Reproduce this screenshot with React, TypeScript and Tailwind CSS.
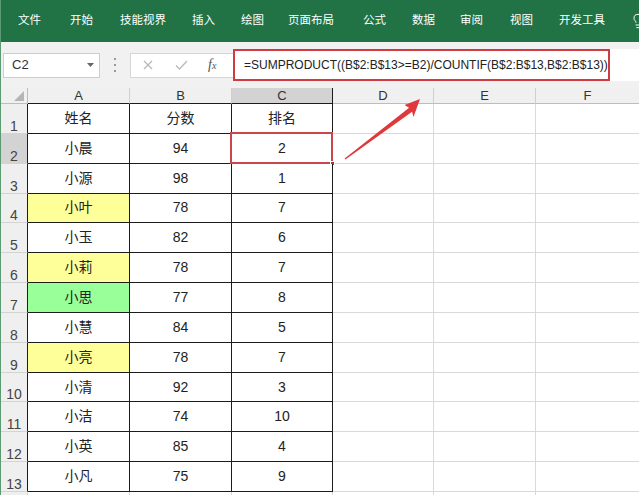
import React from 'react';
import { Lightbulb } from 'lucide-react';

const menu = [
  { label: '文件', cls: 'ml-[17px]' },
  { label: '开始', cls: 'ml-[29px]' },
  { label: '技能视界', cls: 'ml-[27px]' },
  { label: '插入', cls: 'ml-[26px]' },
  { label: '绘图', cls: 'ml-[26px]' },
  { label: '页面布局', cls: 'ml-[24px]' },
  { label: '公式', cls: 'ml-[29px]' },
  { label: '数据', cls: 'ml-[26px]' },
  { label: '审阅', cls: 'ml-[25px]' },
  { label: '视图', cls: 'ml-[27px]' },
  { label: '开发工具', cls: 'ml-[26px]' },
];

type Row = { name: string; score: string; rank: string; fill?: string };

const rows: Row[] = [
  { name: '姓名', score: '分数', rank: '排名' },
  { name: '小晨', score: '94', rank: '2' },
  { name: '小源', score: '98', rank: '1' },
  { name: '小叶', score: '78', rank: '7', fill: 'bg-[#ffff99]' },
  { name: '小玉', score: '82', rank: '6' },
  { name: '小莉', score: '78', rank: '7', fill: 'bg-[#ffff99]' },
  { name: '小思', score: '77', rank: '8', fill: 'bg-[#99ff99]' },
  { name: '小慧', score: '84', rank: '5' },
  { name: '小亮', score: '78', rank: '7', fill: 'bg-[#ffff99]' },
  { name: '小清', score: '92', rank: '3' },
  { name: '小洁', score: '74', rank: '10' },
  { name: '小英', score: '85', rank: '4' },
  { name: '小凡', score: '75', rank: '9' },
];

const COLS = 'grid grid-cols-[27px_102px_102px_101px_101px_102px_104px]';
const FONT = "font-['Liberation_Sans','Noto_Sans_CJK_SC',sans-serif]";

const TableCell: React.FC<{ text: string; fill?: string; selected?: boolean }> = ({ text, fill, selected }) => (
  <div
    className={`relative flex items-center justify-center border-r border-b border-[#1c1c1c] text-[14px] text-[#222] ${fill ?? 'bg-white'}`}
  >
    {text}
    {selected && (
      <>
        <div className="absolute -left-[2px] -top-[2px] -right-[1px] -bottom-[1px] border-2 border-[#c9474b]" />
        <div className="absolute -right-[3px] -bottom-[3px] w-[5px] h-[5px] bg-[#a8383b] border border-white" />
      </>
    )}
  </div>
);

const EmptyCell: React.FC = () => <div className="border-r border-b border-[#d9d9d9] bg-white" />;

export default function App() {
  return (
    <div className={`relative w-[639px] h-[495px] overflow-hidden bg-white border-l border-l-[#5b9a72] ${FONT}`}>
      {/* ribbon tabs */}
      <div className="flex items-center h-[42px] bg-[#217346] text-white text-[11.5px] leading-none">
        {menu.map((m) => (
          <span key={m.label} className={`${m.cls} shrink-0`}>
            {m.label}
          </span>
        ))}
        <Lightbulb size={16} strokeWidth={1.5} className="ml-[25px] shrink-0" />
      </div>

      {/* formula bar */}
      <div className="flex items-center h-[46px] bg-[#f1f1f1]">
        <div className="ml-[2px] flex items-center justify-between w-[97px] h-[25px] bg-white border border-[#cdcdcd] pl-[8px] pr-[5px] text-[13px] text-[#333]">
          <span>C2</span>
          <svg width="7" height="4" viewBox="0 0 7 4">
            <path d="M0 0h7L3.5 4z" fill="#666" />
          </svg>
        </div>
        <div className="flex flex-col items-center justify-center gap-[4px] w-[30px]">
          <span className="w-[2px] h-[2px] bg-[#9a9a9a]" />
          <span className="w-[2px] h-[2px] bg-[#9a9a9a]" />
          <span className="w-[2px] h-[2px] bg-[#9a9a9a]" />
        </div>
        <div className="flex items-center w-[103px] h-[25px] bg-white border border-r-0 border-[#d6d6d6]">
          <svg width="10" height="10" viewBox="0 0 10 10" className="ml-[12px]">
            <path d="M1 1l8 8M9 1l-8 8" stroke="#b9b9b9" strokeWidth="1.3" />
          </svg>
          <svg width="13" height="10" viewBox="0 0 13 10" className="ml-[22px]">
            <path d="M1 5.5l3.5 3.5L12 1" stroke="#b9b9b9" strokeWidth="1.3" fill="none" />
          </svg>
          <span className="ml-[20px] font-['Liberation_Serif',serif] italic text-[14px] text-[#555] leading-none">
            f<span className="text-[10px]">x</span>
          </span>
        </div>
        <div className="flex-1 h-[32px] bg-white">
          <div className="flex items-center w-[377px] h-full border-2 border-[#cf3b42] pl-[9px] text-[12px] text-[#222] whitespace-nowrap">
            =SUMPRODUCT((B$2:B$13&gt;=B2)/COUNTIF(B$2:B$13,B$2:B$13))
          </div>
        </div>
      </div>

      {/* column headers */}
      <div className={`${COLS} h-[16px] bg-[#f0f0f0] text-[13px] text-[#333] leading-none`}>
        <div className="relative border-r border-b border-[#bdbdbd]">
          <svg width="10" height="10" viewBox="0 0 10 10" className="absolute right-[3px] bottom-[2px]">
            <path d="M10 0V10H0z" fill="#b5b5b5" />
          </svg>
        </div>
        {['A', 'B', 'C', 'D', 'E', 'F'].map((c, i) => (
          <div
            key={c}
            className={`flex items-end justify-center pb-[1px] border-r border-b ${
              i < 3 ? 'border-b-[#1c1c1c]' : 'border-b-[#bdbdbd]'
            } ${i === 2 ? 'bg-[#d3d3d3] border-r-[#1c1c1c]' : 'border-r-[#cfcfcf]'}`}
          >
            {c}
          </div>
        ))}
      </div>

      {/* grid rows */}
      {rows.map((r, idx) => (
        <div key={idx} className={`${COLS} h-[29.85px]`}>
          <div
            className={`flex items-end justify-center leading-none text-[14px] text-[#444] border-r border-b border-b-[#d3d3d3] border-r-[#1c1c1c] ${
              idx === 1 ? 'bg-[#d3d3d3]' : 'bg-[#efefef]'
            }`}
          >
            {idx + 1}
          </div>
          <TableCell text={r.name} fill={r.fill} />
          <TableCell text={r.score} />
          <TableCell text={r.rank} selected={idx === 1} />
          <EmptyCell />
          <EmptyCell />
          <EmptyCell />
        </div>
      ))}
      <div className={`${COLS} h-[29.85px]`}>
        <div className="bg-[#efefef] border-r border-b border-[#d3d3d3]" />
        <EmptyCell />
        <EmptyCell />
        <EmptyCell />
        <EmptyCell />
        <EmptyCell />
        <EmptyCell />
      </div>

      {/* annotation arrow */}
      <svg width="639" height="495" viewBox="0 0 639 495" className="absolute left-0 top-0 pointer-events-none">
        <polygon
          points="344.4,159.5 411.1,111.8 412.5,117 419,99 403.5,105 408.1,107.8 343.6,158.5"
          fill="#e0393c"
        />
      </svg>
    </div>
  );
}
